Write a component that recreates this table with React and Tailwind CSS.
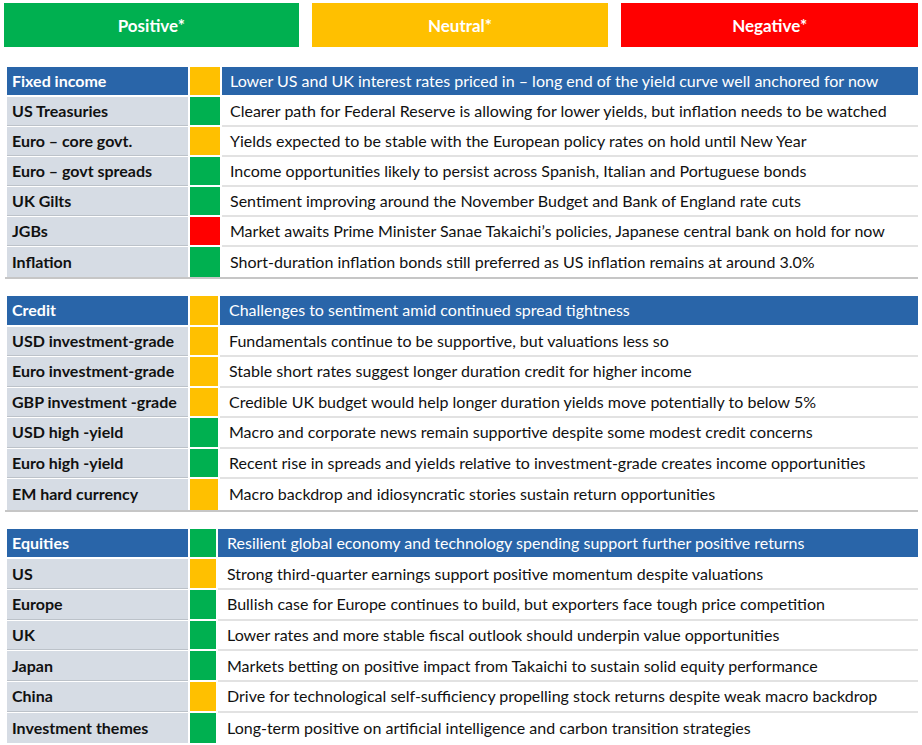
const G = "bg-[#00b050]";
const A = "bg-[#ffc000]";
const R = "bg-[#ff0000]";

const sections = [
  {
    title: "Fixed income",
    color: A,
    summary: "Lower US and UK interest rates priced in – long end of the yield curve well anchored for now",
    rowH: "h-[30px]",
    colW: "w-[30px]",
    pad: "pl-[8px]",
    rows: [
      ["US Treasuries", G, "Clearer path for Federal Reserve is allowing for lower yields, but inflation needs to be watched"],
      ["Euro – core govt.", A, "Yields expected to be stable with the European policy rates on hold until New Year"],
      ["Euro – govt spreads", G, "Income opportunities likely to persist across Spanish, Italian and Portuguese bonds"],
      ["UK Gilts", G, "Sentiment improving around the November Budget and Bank of England rate cuts"],
      ["JGBs", R, "Market awaits Prime Minister Sanae Takaichi’s policies, Japanese central bank on hold for now"],
      ["Inflation", G, "Short-duration inflation bonds still preferred as US inflation remains at around 3.0%"],
    ],
  },
  {
    title: "Credit",
    color: A,
    summary: "Challenges to sentiment amid continued spread tightness",
    rowH: "h-[30.5px]",
    colW: "w-[28px]",
    pad: "pl-[9px]",
    rows: [
      ["USD investment-grade", A, "Fundamentals continue to be supportive, but valuations less so"],
      ["Euro investment-grade", A, "Stable short rates suggest longer duration credit for higher income"],
      ["GBP investment -grade", A, "Credible UK budget would help longer duration yields move potentially to below 5%"],
      ["USD high -yield", G, "Macro and corporate news remain supportive despite some modest credit concerns"],
      ["Euro high -yield", G, "Recent rise in spreads and yields relative to investment-grade creates income opportunities"],
      ["EM hard currency", A, "Macro backdrop and idiosyncratic stories sustain return opportunities"],
    ],
  },
  {
    title: "Equities",
    color: G,
    summary: "Resilient global economy and technology spending support further positive returns",
    rowH: "h-[30.7px]",
    colW: "w-[26px]",
    pad: "pl-[9px]",
    rows: [
      ["US", A, "Strong third-quarter earnings support positive momentum despite valuations"],
      ["Europe", G, "Bullish case for Europe continues to build, but exporters face tough price competition"],
      ["UK", G, "Lower rates and more stable fiscal outlook should underpin value opportunities"],
      ["Japan", G, "Markets betting on positive impact from Takaichi to sustain solid equity performance"],
      ["China", A, "Drive for technological self-sufficiency propelling stock returns despite weak macro backdrop"],
      ["Investment themes", G, "Long-term positive on artificial intelligence and carbon transition strategies"],
    ],
  },
];

function Section({ s, last }) {
  return (
    <div className={last ? "" : "border-b-2 border-[#c6c6c6] ml-[-2px] pl-[2px]"}>
      <div className={`flex ${s.rowH} pb-[2px]`}>
        <div className="w-[181px] bg-[#2965a9] text-white font-bold flex items-center pl-[5px]">{s.title}</div>
        <div className={`${s.colW} ml-[2px] ${s.color}`}></div>
        <div className={`flex-1 ml-[2px] bg-[#2965a9] text-white flex items-center ${s.pad} whitespace-nowrap`}>{s.summary}</div>
      </div>
      {s.rows.map((r, i) => {
        const isLast = i === s.rows.length - 1;
        return (
          <div key={i} className={`flex ${s.rowH}`}>
            <div className={`w-[181px] bg-[#d6dce4] font-bold text-[#111] flex items-center pl-[5px] whitespace-nowrap ${isLast ? "" : "border-b border-[#bcc2c9] mb-[1px]"}`}>{r[0]}</div>
            <div className={`${s.colW} ml-[2px] ${r[1]} ${isLast ? "" : "mb-[2px]"}`}></div>
            <div className={`flex-1 ml-[2px] bg-white text-[#111] flex items-center ${s.pad} whitespace-nowrap ${isLast ? "" : "border-b-2 border-[#e2e2e2]"}`}>{r[2]}</div>
          </div>
        );
      })}
    </div>
  );
}

export default function App() {
  return (
    <div
      className="w-[922px] h-[745px] overflow-hidden bg-white text-[16px] leading-none"
      style={{ fontFamily: "Lato, 'Liberation Sans', sans-serif" }}
    >
      <div className="flex pt-[3px] pl-[4px] pr-[4px] gap-[13px] h-[47px]">
        <div className="w-[295px] bg-[#00b050] text-white font-bold text-[17px] flex items-center justify-center">Positive*</div>
        <div className="w-[297px] bg-[#ffc000] text-white font-bold text-[17px] flex items-center justify-center">Neutral*</div>
        <div className="w-[297px] bg-[#ff0000] text-white font-bold text-[17px] flex items-center justify-center">Negative*</div>
      </div>
      <div className="pl-[7px] pr-[4px] pt-[20px] flex flex-col gap-[17px]">
        {sections.map((s, i) => (
          <Section key={i} s={s} last={i === sections.length - 1} />
        ))}
      </div>
    </div>
  );
}
